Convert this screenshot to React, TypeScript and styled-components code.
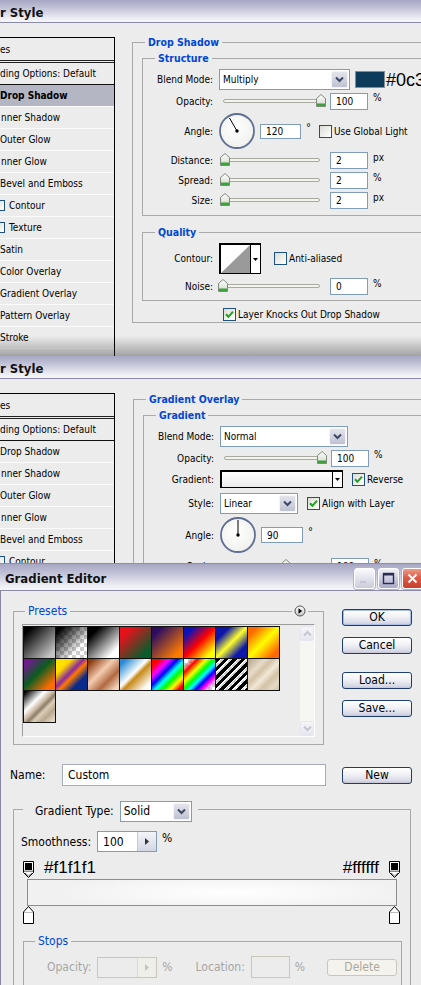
import React from 'react';
import styled, { createGlobalStyle, css } from 'styled-components';

// === TOKENS ===

const UI = `"DejaVu Sans Condensed", "Liberation Sans", Arial, sans-serif`;
const ARIAL = `"Liberation Sans", Arial, sans-serif`;
const BG = '#ececec';
const BLUE = '#0046d5';
const FIELD_BORDER = '#7f9db9';
const GROUP_LINE = '#a9a9a9';
const CHECKER = 'conic-gradient(#cdcdcd 25%, #ffffff 0 50%, #cdcdcd 0 75%, #ffffff 0) 0 0 / 8px 8px';

const GlobalStyle = createGlobalStyle`
  * { box-sizing: border-box; }
  html, body { margin: 0; padding: 0; background: ${BG}; }
  body { font-family: ${UI}; font-size: 10px; color: #000; }
`;

// === WINDOW CHROME ===

const Page = styled.main`
  width: 421px;
  height: 985px;
  overflow: hidden;
  display: flex;
  flex-direction: column;
`;

const Window = styled.section<{ $height: number; $shade?: boolean }>`
  position: relative;
  flex: none;
  height: ${({ $height }) => $height}px;
  overflow: hidden;
  background: ${BG};
  display: flex;
  flex-direction: column;

  ${({ $shade }) => $shade && css`
    &::after {
      content: '';
      position: absolute;
      left: 0;
      right: 0;
      bottom: 0;
      height: 20px;
      pointer-events: none;
      background: linear-gradient(to bottom, rgba(40, 40, 40, 0), rgba(40, 40, 40, 0.38));
    }
  `}
`;

const TitleBar = styled.header<{ $height: number; $padTop?: number; $topLine?: boolean }>`
  flex: none;
  height: ${({ $height }) => $height}px;
  padding-top: ${({ $padTop }) => $padTop ?? 0}px;
  display: flex;
  align-items: center;
  background: linear-gradient(to bottom, #a7a7c4 0%, #b9b9d1 25%, #d4d4e3 55%, #ececf3 82%, #f7f7fa 100%);
  border-bottom: 1px solid #8a8aa6;
  ${({ $topLine }) => $topLine && css`border-top: 1px solid #8e8ea8;`}
`;

const TitleText = styled.h1<{ $indent: number }>`
  flex: 1;
  margin: 0 0 0 ${({ $indent }) => $indent}px;
  font: bold 13px ${UI};
  color: #111;
  white-space: nowrap;
`;

const CaptionButtons = styled.div`
  flex: none;
  display: flex;
  gap: 3px;
  margin-right: -2px;
`;

const CaptionButton = styled.span<{ $kind: 'min' | 'max' | 'close' }>`
  width: 21px;
  height: 21px;
  border: 1px solid #fff;
  border-radius: 3px;
  display: flex;
  align-items: center;
  justify-content: center;
  box-shadow: 0 0 0 1px #b2b2c8;
  background: ${({ $kind }) =>
    $kind === 'close'
      ? 'linear-gradient(to bottom, #ee9a88 0%, #dc5c48 45%, #c8402c 100%)'
      : $kind === 'max'
        ? 'linear-gradient(to bottom, #f2f2f8 0%, #c8c9de 55%, #a9abc8 100%)'
        : 'linear-gradient(to bottom, #fafafd 0%, #dedeea 60%, #cacad9 100%)'};
`;

// === LAYER STYLE: STYLES LIST ===

const DialogBody = styled.div`
  flex: 1;
  min-height: 0;
  display: flex;
  align-items: flex-start;
`;

const StyleList = styled.ul`
  flex: none;
  align-self: stretch;
  width: 115px;
  margin: 14px 0 0 0;
  padding: 0;
  list-style: none;
  border-right: 1px solid #000;
`;

const ListHeader = styled.li`
  height: 26px;
  display: flex;
  align-items: center;
  border-top: 1px solid #000;
  border-bottom: 3px double #222;
  white-space: nowrap;
`;

const ListItem = styled.li<{ $indent: number; $selected?: boolean; $dark?: boolean }>`
  height: 22px;
  padding-left: ${({ $indent }) => $indent}px;
  display: flex;
  align-items: center;
  gap: 4px;
  white-space: nowrap;
  background: ${({ $selected }) => ($selected ? '#b5b6c3' : BG)};
  font-weight: ${({ $selected }) => ($selected ? 'bold' : 'normal')};
  border-bottom: 1px solid ${({ $dark }) => ($dark ? '#111' : '#fbfbfb')};
`;

const ListCheck = styled.span`
  flex: none;
  width: 11px;
  height: 11px;
  margin-left: -6px;
  border: 1px solid #1c5180;
  background: linear-gradient(135deg, #dcdcd6 0%, #f3f3f0 65%, #fff 100%);
`;

// === GROUP BOXES AND FORM ROWS ===

const Content = styled.div<{ $top: number; $left: number }>`
  flex: none;
  width: 330px;
  margin: ${({ $top }) => $top}px 0 0 ${({ $left }) => $left}px;
`;

const Group = styled.fieldset<{ $mt?: number; $ml?: number; $width?: number; $height?: number }>`
  position: relative;
  min-width: 0;
  margin: ${({ $mt }) => $mt ?? 0}px 0 0 ${({ $ml }) => $ml ?? 0}px;
  padding: 0;
  border: 1px solid ${GROUP_LINE};
  ${({ $width }) => $width && css`width: ${$width}px;`}
  ${({ $height }) => $height && css`height: ${$height}px;`}
`;

const Legend = styled.legend<{ $size?: number; $regular?: boolean; $ml?: number }>`
  margin-left: ${({ $ml }) => $ml ?? 12}px;
  padding: 0 3px;
  color: ${BLUE};
  font-family: ${UI};
  font-weight: ${({ $regular }) => ($regular ? 'normal' : 'bold')};
  font-size: ${({ $size }) => $size ?? 10.5}px;
  line-height: ${({ $size }) => ($size ? $size + 1 : 12)}px;
  white-space: nowrap;
`;

const GroupInner = styled.div<{ $pad: string }>`
  padding: ${({ $pad }) => $pad};
`;

const FieldRow = styled.div<{ $h: number; $mt?: number; $pl?: number }>`
  display: flex;
  align-items: center;
  height: ${({ $h }) => $h}px;
  margin-top: ${({ $mt }) => $mt ?? 0}px;
  padding-left: ${({ $pl }) => $pl ?? 0}px;
  white-space: nowrap;
`;

const FieldLabel = styled.label`
  flex: none;
  width: 70px;
  margin-right: 6px;
  text-align: right;
  white-space: nowrap;
`;

const Unit = styled.span<{ $ml?: number; $up?: number }>`
  flex: none;
  align-self: flex-start;
  margin-left: ${({ $ml }) => $ml ?? 5}px;
  margin-top: ${({ $up }) => $up ?? 0}px;
  line-height: 12px;
`;

const NumField = styled.div<{ $w: number; $h: number; $disabled?: boolean; $ml?: number }>`
  flex: none;
  display: flex;
  align-items: center;
  width: ${({ $w }) => $w}px;
  height: ${({ $h }) => $h}px;
  margin-left: ${({ $ml }) => $ml ?? 0}px;
  padding-left: 5px;
  background: ${({ $disabled }) => ($disabled ? BG : '#fff')};
  border: 1px solid ${({ $disabled }) => ($disabled ? '#c9c7ba' : FIELD_BORDER)};
`;

const SelectBox = styled.div<{ $w: number; $h: number }>`
  flex: none;
  display: flex;
  width: ${({ $w }) => $w}px;
  height: ${({ $h }) => $h}px;
  background: #fff;
  border: 1px solid ${FIELD_BORDER};
`;

const SelectValue = styled.span`
  flex: 1;
  display: flex;
  align-items: center;
  padding-left: 3px;
  overflow: hidden;
`;

const DropButton = styled.span`
  flex: none;
  width: 17px;
  margin: 1px;
  display: flex;
  align-items: center;
  justify-content: center;
  border: 1px solid #f4f4f8;
  border-radius: 2px;
  background: linear-gradient(to bottom, #e4e4ec 0%, #cfd0dd 60%, #bfc0d1 100%);
`;

const CheckBox = styled.span<{ $size: number }>`
  flex: none;
  display: inline-flex;
  align-items: center;
  justify-content: center;
  width: ${({ $size }) => $size}px;
  height: ${({ $size }) => $size}px;
  border: 1px solid #1c5180;
  background: linear-gradient(135deg, #dcdcd6 0%, #f3f3f0 65%, #fff 100%);
`;

const CheckRow = styled.span<{ $ml?: number }>`
  flex: none;
  display: inline-flex;
  align-items: center;
  gap: 2px;
  margin-left: ${({ $ml }) => $ml ?? 0}px;
`;

const SliderBox = styled.div`
  position: relative;
  flex: none;
  width: 111px;
  height: 16px;
`;

const SliderTrack = styled.div`
  position: absolute;
  left: 4px;
  right: 10px;
  top: 6px;
  height: 4px;
  border: 1px solid #aaa9a0;
  border-radius: 2px;
  background: #f4f4ef;
`;

const SliderThumb = styled.svg`
  position: absolute;
  top: 1px;
`;

const DialSvg = styled.svg`
  flex: none;
`;

const Swatch = styled.span<{ $color: string }>`
  flex: none;
  width: 30px;
  height: 17px;
  margin-left: 5px;
  background: ${({ $color }) => $color};
  border: 1px solid #8c8c8c;
`;

const BigHex = styled.span`
  flex: none;
  margin-left: 1px;
  font: 18px/18px ${ARIAL};
  color: #000;
`;

const ContourPicker = styled.div`
  flex: none;
  display: flex;
  width: 42px;
  height: 31px;
  border: 1px solid #000;
  border-width: 2px 1px 1px 2px;
  background: #fff;
`;

const PickerArrow = styled.span`
  flex: none;
  width: 10px;
  display: flex;
  align-items: center;
  justify-content: center;
  border-left: 1px solid #000;
  background: #fff;
`;

const GradientPicker = styled.div`
  flex: none;
  display: flex;
  width: 123px;
  height: 18px;
  border: 1px solid #000;
  border-width: 2px 1px 1px 2px;
  background: linear-gradient(to bottom, #ffffff 0%, #f4f4f4 60%, #ebebeb 100%);
`;

const PickerFill = styled.span`
  flex: 1;
`;

const Degree = styled.span`
  flex: none;
  align-self: flex-start;
  margin: 10px 0 0 5px;
  font-size: 11px;
  line-height: 12px;
`;

// === GRADIENT EDITOR ===

const EditorBody = styled.div`
  flex: 1;
  min-height: 0;
  display: flex;
  flex-direction: column;
  padding: 14px 0 0 9px;
  border-left: 1px solid #8686a2;
  font-size: 12px;
`;

const TopArea = styled.div`
  display: flex;
  align-items: flex-start;
`;

const MenuButton = styled.span`
  position: absolute;
  right: 15px;
  top: -13px;
  padding: 0 2px;
  background: ${BG};
  display: flex;
`;

const SwatchWell = styled.div`
  display: flex;
  width: 293px;
  height: 113px;
  margin: 6px 0 7px 8px;
  padding: 1px 0 0 0;
  border: 1px solid;
  border-color: #9c9c9c #ffffff #ffffff #9c9c9c;
`;

const SwatchGrid = styled.div`
  flex: none;
  width: 257px;
  display: flex;
  flex-wrap: wrap;
  align-content: flex-start;
`;

const PresetSwatch = styled.span<{ $bg: string }>`
  flex: none;
  width: 33px;
  height: 33px;
  margin: 0 -1px -1px 0;
  border: 1px solid #101010;
  background: ${({ $bg }) => $bg};
`;

const ScrollBar = styled.div`
  flex: none;
  width: 14px;
  margin-left: auto;
  display: flex;
  flex-direction: column;
  justify-content: space-between;
  background: #f6f6f2;
`;

const ScrollArrow = styled.span`
  height: 15px;
  display: flex;
  align-items: center;
  justify-content: center;
  border: 1px solid #e6e6ee;
  border-radius: 2px;
  background: linear-gradient(to bottom, #f6f6f9 0%, #e6e6ee 100%);
`;

const ButtonColumn = styled.div`
  flex: none;
  display: flex;
  flex-direction: column;
  margin: 4px 0 0 18px;
`;

const PushButton = styled.button<{ $default?: boolean; $disabled?: boolean; $mt?: number; $ml?: number }>`
  flex: none;
  width: 70px;
  height: 17px;
  margin: ${({ $mt }) => $mt ?? 0}px 0 0 ${({ $ml }) => $ml ?? 0}px;
  padding: 0;
  font: 12px/15px ${UI};
  color: ${({ $disabled }) => ($disabled ? '#aca899' : '#000')};
  border: 1px solid ${({ $disabled }) => ($disabled ? '#c9c7ba' : '#1f3c6e')};
  border-radius: 3px;
  background: ${({ $disabled }) =>
    $disabled
      ? '#f4f3ee'
      : 'linear-gradient(to bottom, #ffffff 0%, #f3f3f7 40%, #d9dae6 85%, #c3c4d4 100%)'};
  ${({ $default }) => $default && css`box-shadow: inset 0 0 0 1px #a9bde6;`}
`;

const EditorRow = styled.div<{ $h: number; $mt?: number; $pl?: number }>`
  display: flex;
  align-items: center;
  height: ${({ $h }) => $h}px;
  margin-top: ${({ $mt }) => $mt ?? 0}px;
  padding-left: ${({ $pl }) => $pl ?? 0}px;
  white-space: nowrap;
`;

const EditorLabel = styled.span<{ $w?: number; $muted?: boolean; $ml?: number }>`
  flex: none;
  ${({ $w }) => $w && css`width: ${$w}px;`}
  margin-left: ${({ $ml }) => $ml ?? 0}px;
  margin-right: 6px;
  color: ${({ $muted }) => ($muted ? '#a6a6a6' : '#000')};
`;

const TextField = styled.div<{ $w: number; $h: number }>`
  flex: none;
  display: flex;
  align-items: center;
  width: ${({ $w }) => $w}px;
  height: ${({ $h }) => $h}px;
  padding-left: 5px;
  background: #fff;
  border: 1px solid #a5acb5;
`;

const SpinField = styled.div<{ $disabled?: boolean }>`
  flex: none;
  display: flex;
  width: 60px;
  height: 21px;
  background: ${({ $disabled }) => ($disabled ? BG : '#fff')};
  border: 1px solid ${({ $disabled }) => ($disabled ? '#c9c7ba' : FIELD_BORDER)};
`;

const SpinValue = styled.span`
  flex: 1;
  display: flex;
  align-items: center;
  padding-left: 5px;
`;

const SpinArrow = styled.span<{ $disabled?: boolean }>`
  flex: none;
  width: 19px;
  display: flex;
  align-items: center;
  justify-content: center;
  border-left: 1px solid ${({ $disabled }) => ($disabled ? '#dcdad0' : '#c4c8d8')};
  background: ${({ $disabled }) =>
    $disabled ? '#efefea' : 'linear-gradient(to bottom, #f4f4f8 0%, #d4d6e4 100%)'};
`;

const TypeLegend = styled.legend`
  display: flex;
  align-items: flex-start;
  height: 17px;
  margin-left: 9px;
  padding: 0 6px 0 12px;
  font-size: 12px;
  line-height: 21px;
  white-space: nowrap;
`;

const StopRow = styled.div<{ $h: number; $mt?: number }>`
  display: flex;
  align-items: flex-start;
  justify-content: space-between;
  width: 377px;
  height: ${({ $h }) => $h}px;
  margin: ${({ $mt }) => $mt ?? 0}px 0 0 9px;
`;

const StopSide = styled.span`
  display: flex;
  align-items: flex-start;
  gap: 10px;
`;

const StopHex = styled.span`
  margin-top: -2px;
  font: 17px/18px ${ARIAL};
  color: #000;
`;

const GradientBar = styled.div`
  width: 370px;
  height: 27px;
  margin: 2px 0 0 13px;
  border: 1px solid #8e8e8e;
  background: radial-gradient(ellipse 60% 90% at 55% 50%, #ffffff 0%, #f8f8f8 40%, #f1f1f1 80%);
`;

// === SMALL DRAWINGS ===

function Chevron({ color = '#3c4866' }: { color?: string }) {
  return (
    <svg width="9" height="7" viewBox="0 0 9 7">
      <path d="M1 1.5 L4.5 5 L8 1.5" fill="none" stroke={color} strokeWidth="2" />
    </svg>
  );
}

function ChevronUp({ color }: { color: string }) {
  return (
    <svg width="9" height="7" viewBox="0 0 9 7">
      <path d="M1 5.5 L4.5 2 L8 5.5" fill="none" stroke={color} strokeWidth="2" />
    </svg>
  );
}

function DownTriangle() {
  return (
    <svg width="5" height="3" viewBox="0 0 5 3">
      <path d="M0 0 H5 L2.5 3 Z" fill="#000" />
    </svg>
  );
}

function Check({ checked, size = 13 }: { checked?: boolean; size?: number }) {
  return (
    <CheckBox $size={size}>
      {checked && (
        <svg width="9" height="9" viewBox="0 0 9 9">
          <path d="M1 4.2 L3.4 6.8 L8 1.6" fill="none" stroke="#21a121" strokeWidth="2" />
        </svg>
      )}
    </CheckBox>
  );
}

function Select({ value, width, height = 21 }: { value: string; width: number; height?: number }) {
  return (
    <SelectBox $w={width} $h={height}>
      <SelectValue>{value}</SelectValue>
      <DropButton>
        <Chevron />
      </DropButton>
    </SelectBox>
  );
}

function Slider({ value }: { value: number }) {
  return (
    <SliderBox>
      <SliderTrack />
      <SliderThumb width="10" height="13" viewBox="0 0 10 13" style={{ left: 1 + value * 0.96 }}>
        <defs>
          <linearGradient id="thumbFill" x1="0" y1="0" x2="0" y2="1">
            <stop offset="0" stopColor="#ffffff" />
            <stop offset="1" stopColor="#d4d6cc" />
          </linearGradient>
        </defs>
        <path d="M0.5 4.5 L5 0.5 L9.5 4.5 V12.5 H0.5 Z" fill="url(#thumbFill)" stroke="#7d8a7c" />
        <rect x="1" y="9.5" width="8" height="2.5" fill="#3ca23c" />
      </SliderThumb>
    </SliderBox>
  );
}

function Dial({ angle, id }: { angle: number; id: string }) {
  const rad = (angle * Math.PI) / 180;
  const x2 = 18 + Math.cos(rad) * 15;
  const y2 = 18 - Math.sin(rad) * 15;
  return (
    <DialSvg width="37" height="37" viewBox="0 0 37 37">
      <defs>
        <radialGradient id={id} cx="0.45" cy="0.4" r="0.7">
          <stop offset="0" stopColor="#ffffff" />
          <stop offset="0.75" stopColor="#f2f2f0" />
          <stop offset="1" stopColor="#d8d8d8" />
        </radialGradient>
      </defs>
      <circle cx="18" cy="18" r="17" fill={`url(#${id})`} stroke="#5f6f94" strokeWidth="1.8" />
      <line x1="18" y1="18" x2={x2} y2={y2} stroke="#000" strokeWidth="1" />
      <circle cx="18" cy="18" r="1.7" fill="#000" />
    </DialSvg>
  );
}

function NumberInput({ value }: { value: string }) {
  return <NumField $w={38} $h={17}>{value}</NumField>;
}

function SliderRow({ label, value, pos, unit, mt = 0 }: { label: string; value: string; pos: number; unit: string; mt?: number }) {
  return (
    <FieldRow $h={20} $mt={mt}>
      <FieldLabel>{label}</FieldLabel>
      <Slider value={pos} />
      <NumberInput value={value} />
      <Unit $up={2}>{unit}</Unit>
    </FieldRow>
  );
}

function OpacityStop() {
  return (
    <svg width="11" height="17" viewBox="0 0 11 17">
      <path d="M0.5 0.5 H10.5 V11.5 L5.5 16.5 L0.5 11.5 Z" fill="#fff" stroke="#000" />
      <rect x="2" y="2" width="7" height="7" fill="#000" />
      <rect x="1" y="9.5" width="9" height="1.5" fill="#8a8a8a" />
      <path d="M2 12 L5.5 15 L9 12" fill="none" stroke="#666" />
    </svg>
  );
}

function ColorStop() {
  return (
    <svg width="11" height="18" viewBox="0 0 11 18">
      <path d="M5.5 0.5 L10.5 6 V17.5 H0.5 V6 Z" fill="#fff" stroke="#000" />
      <path d="M1 6.5 H10" stroke="#bdbdbd" />
    </svg>
  );
}

// === DATA ===

// the dialogs are cropped at the left edge, so only the visible part of each entry is listed
const EFFECTS: { name: string; sub?: boolean; indent?: number }[] = [
  { name: 'Drop Shadow' },
  { name: 'nner Shadow', indent: 1 },
  { name: 'Outer Glow' },
  { name: 'nner Glow', indent: 1 },
  { name: 'Bevel and Emboss' },
  { name: 'Contour', sub: true },
  { name: 'Texture', sub: true },
  { name: 'Satin' },
  { name: 'Color Overlay' },
  { name: 'Gradient Overlay' },
  { name: 'Pattern Overlay' },
  { name: 'Stroke' },
];

const PRESETS: string[] = [
  'linear-gradient(135deg, #000 12%, #c4c4c4 88%)',
  `linear-gradient(135deg, #000 10%, rgba(0,0,0,0) 72%), ${CHECKER}`,
  'linear-gradient(135deg, #000 18%, #fff 82%)',
  'linear-gradient(135deg, #e8101a 18%, #0b5b2c 82%)',
  'linear-gradient(135deg, #2b0c60 15%, #ff7b00 85%)',
  'linear-gradient(135deg, #0a12b8 15%, #ff0000 50%, #ffff00 85%)',
  'linear-gradient(135deg, #0c16a8 22%, #ffff2a 50%, #0c16a8 78%)',
  'linear-gradient(135deg, #ff6a00 15%, #ffff00 50%, #ff6a00 85%)',
  'linear-gradient(135deg, #701a8e 10%, #0a5c20 45%, #ff6c00 85%)',
  'linear-gradient(135deg, #ffe200 15%, #ffd800 25%, #8c2a9e 45%, #ff7a00 55%, #0a2a8c 75%)',
  'linear-gradient(135deg, #8a3a10 8%, #f4ccb0 42%, #b06a42 68%, #f2d4b8 92%)',
  'linear-gradient(135deg, #2a8ad4 10%, #ffffff 45%, #c88a18 55%, #ffffff 88%)',
  'linear-gradient(135deg, #ff0000 12%, #ff00ff 28%, #0000ff 42%, #00ffff 54%, #00ff00 66%, #ffff00 79%, #ff0000 92%)',
  `linear-gradient(135deg, rgba(255,0,0,0) 10%, #ff0000 22%, #ffff00 36%, #00ff00 48%, #00ffff 58%, #0000ff 68%, #ff00ff 78%, rgba(255,0,255,0) 90%), ${CHECKER}`,
  `repeating-linear-gradient(135deg, #000 0 3px, #fff 3px 4px, rgba(255,255,255,0) 4px 6px), ${CHECKER}`,
  'linear-gradient(135deg, #b2a28a 0%, #e8dcc8 28%, #d2c2a6 40%, #f2e8d6 55%, #d2c2a6 70%, #e6dac4 86%, #cdbda2 100%)',
  'linear-gradient(135deg, #000 4%, #ffffff 34%, #c9b9a1 48%, #8c7c6a 56%, #dccdb6 64%, #b8a890 78%, #e2d6c2 94%)',
];

// === PIECES ===

function StylesPanel({ selected }: { selected: string }) {
  return (
    <StyleList>
      <ListHeader>es</ListHeader>
      <ListItem $indent={0} $dark>ding Options: Default</ListItem>
      {EFFECTS.map(({ name, sub, indent }) => (
        <ListItem key={name} $indent={indent ?? 0} $selected={name === selected}>
          {sub && <ListCheck />}
          {name}
        </ListItem>
      ))}
    </StyleList>
  );
}

function DropShadowPanel() {
  return (
    <Content $top={13} $left={17}>
      <Group>
        <Legend>Drop Shadow</Legend>
        <GroupInner $pad="4px 0 0 9px">
          <Group>
            <Legend>Structure</Legend>
            <GroupInner $pad="5px 0 5px 0">
              <FieldRow $h={21}>
                <FieldLabel>Blend Mode:</FieldLabel>
                <Select value="Multiply" width={131} />
                <Swatch $color="#0d3b5c" />
                <BigHex>#0c3</BigHex>
              </FieldRow>
              <FieldRow $h={18} $mt={2}>
                <FieldLabel>Opacity:</FieldLabel>
                <Slider value={100} />
                <NumberInput value="100" />
                <Unit>%</Unit>
              </FieldRow>
              <FieldRow $h={38} $mt={2}>
                <FieldLabel>Angle:</FieldLabel>
                <Dial angle={120} id="dialA" />
                <NumField $w={41} $h={15} $ml={4}>120</NumField>
                <Degree>°</Degree>
                <CheckRow $ml={8}>
                  <Check />
                  Use Global Light
                </CheckRow>
              </FieldRow>
              <SliderRow label="Distance:" value="2" pos={0} unit="px" />
              <SliderRow label="Spread:" value="2" pos={0} unit="%" />
              <SliderRow label="Size:" value="2" pos={0} unit="px" />
            </GroupInner>
          </Group>
          <Group $mt={10}>
            <Legend>Quality</Legend>
            <GroupInner $pad="5px 0 4px 0">
              <FieldRow $h={31}>
                <FieldLabel>Contour:</FieldLabel>
                <ContourPicker>
                  <PickerFill>
                    <svg width="29" height="28" viewBox="0 0 29 28">
                      <path d="M0 28 L29 0 V28 Z" fill="#9a9a9a" />
                    </svg>
                  </PickerFill>
                  <PickerArrow>
                    <DownTriangle />
                  </PickerArrow>
                </ContourPicker>
                <CheckRow $ml={13}>
                  <Check />
                  Anti-aliased
                </CheckRow>
              </FieldRow>
              <SliderRow label="Noise:" value="0" pos={-2} unit="%" mt={2} />
            </GroupInner>
          </Group>
          <FieldRow $h={15} $mt={6} $pl={81}>
            <CheckRow>
              <Check checked />
              Layer Knocks Out Drop Shadow
            </CheckRow>
          </FieldRow>
        </GroupInner>
      </Group>
    </Content>
  );
}

function GradientOverlayPanel() {
  return (
    <Content $top={14} $left={18}>
      <Group>
        <Legend>Gradient Overlay</Legend>
        <GroupInner $pad="4px 0 0 9px">
          <Group>
            <Legend>Gradient</Legend>
            <GroupInner $pad="5px 0 5px 0">
              <FieldRow $h={21}>
                <FieldLabel>Blend Mode:</FieldLabel>
                <Select value="Normal" width={128} />
              </FieldRow>
              <FieldRow $h={18} $mt={2}>
                <FieldLabel>Opacity:</FieldLabel>
                <Slider value={100} />
                <NumberInput value="100" />
                <Unit>%</Unit>
              </FieldRow>
              <FieldRow $h={20} $mt={2}>
                <FieldLabel>Gradient:</FieldLabel>
                <GradientPicker>
                  <PickerFill />
                  <PickerArrow>
                    <DownTriangle />
                  </PickerArrow>
                </GradientPicker>
                <CheckRow $ml={9}>
                  <Check checked />
                  Reverse
                </CheckRow>
              </FieldRow>
              <FieldRow $h={21} $mt={4}>
                <FieldLabel>Style:</FieldLabel>
                <Select value="Linear" width={78} />
                <CheckRow $ml={9}>
                  <Check checked />
                  Align with Layer
                </CheckRow>
              </FieldRow>
              <FieldRow $h={38} $mt={2}>
                <FieldLabel>Angle:</FieldLabel>
                <Dial angle={90} id="dialB" />
                <NumField $w={42} $h={16} $ml={4}>90</NumField>
                <Degree>°</Degree>
              </FieldRow>
              <SliderRow label="Scale:" value="100" pos={62} unit="%" mt={2} />
            </GroupInner>
          </Group>
        </GroupInner>
      </Group>
    </Content>
  );
}

function GradientEditor() {
  return (
    <Window $height={422}>
      <TitleBar $height={28} $padTop={3} $topLine>
        <TitleText $indent={5}>Gradient Editor</TitleText>
        <CaptionButtons>
          <CaptionButton $kind="min">
            <svg width="13" height="13" viewBox="0 0 13 13">
              <rect x="2" y="9" width="6" height="2" fill="#c4c4d2" />
            </svg>
          </CaptionButton>
          <CaptionButton $kind="max">
            <svg width="13" height="13" viewBox="0 0 13 13">
              <rect x="1.5" y="1.5" width="10" height="10" fill="none" stroke="#2a2c52" strokeWidth="1.4" />
              <rect x="1.5" y="1.5" width="10" height="2" fill="#2a2c52" />
            </svg>
          </CaptionButton>
          <CaptionButton $kind="close">
            <svg width="13" height="13" viewBox="0 0 13 13">
              <path d="M2.5 2.5 L10.5 10.5 M10.5 2.5 L2.5 10.5" stroke="#fff" strokeWidth="2" />
            </svg>
          </CaptionButton>
        </CaptionButtons>
      </TitleBar>

      <EditorBody>
        <TopArea>
          <Group $ml={3} $width={311}>
            <Legend $regular $size={12} $ml={11}>Presets</Legend>
            <MenuButton>
              <svg width="12" height="12" viewBox="0 0 12 12">
                <defs>
                  <linearGradient id="menuFill" x1="0" y1="0" x2="0" y2="1">
                    <stop offset="0" stopColor="#ffffff" />
                    <stop offset="1" stopColor="#c8c8c8" />
                  </linearGradient>
                </defs>
                <circle cx="6" cy="6" r="5" fill="url(#menuFill)" stroke="#555" />
                <path d="M4.5 3.2 L8.2 6 L4.5 8.8 Z" fill="#000" />
              </svg>
            </MenuButton>
            <SwatchWell>
              <SwatchGrid>
                {PRESETS.map((bg, i) => (
                  <PresetSwatch key={i} $bg={bg} />
                ))}
              </SwatchGrid>
              <ScrollBar>
                <ScrollArrow>
                  <ChevronUp color="#c6c6d0" />
                </ScrollArrow>
                <ScrollArrow>
                  <Chevron color="#c6c6d0" />
                </ScrollArrow>
              </ScrollBar>
            </SwatchWell>
          </Group>
          <ButtonColumn>
            <PushButton $default>OK</PushButton>
            <PushButton $mt={11}>Cancel</PushButton>
            <PushButton $mt={18}>Load...</PushButton>
            <PushButton $mt={11}>Save...</PushButton>
          </ButtonColumn>
        </TopArea>

        <EditorRow $h={22} $mt={19}>
          <EditorLabel $w={46}>Name:</EditorLabel>
          <TextField $w={264} $h={22}>Custom</TextField>
          <PushButton $ml={16}>New</PushButton>
        </EditorRow>

        <Group $mt={15} $ml={3} $width={398} $height={200}>
          <TypeLegend>
            <EditorLabel>Gradient Type:</EditorLabel>
            <Select value="Solid" width={72} />
          </TypeLegend>
          <EditorRow $h={21} $mt={13} $pl={7}>
            <EditorLabel>Smoothness:</EditorLabel>
            <SpinField>
              <SpinValue>100</SpinValue>
              <SpinArrow>
                <svg width="4" height="7" viewBox="0 0 4 7">
                  <path d="M0 0 L4 3.5 L0 7 Z" fill="#333" />
                </svg>
              </SpinArrow>
            </SpinField>
            <Unit $ml={5} $up={1}>%</Unit>
          </EditorRow>

          <StopRow $h={16} $mt={9}>
            <StopSide>
              <OpacityStop />
              <StopHex>#f1f1f1</StopHex>
            </StopSide>
            <StopSide>
              <StopHex>#ffffff</StopHex>
              <OpacityStop />
            </StopSide>
          </StopRow>
          <GradientBar />
          <StopRow $h={18}>
            <ColorStop />
            <ColorStop />
          </StopRow>

          <Group $mt={11} $ml={9} $width={379} $height={80}>
            <Legend $regular $size={12} $ml={11}>Stops</Legend>
            <EditorRow $h={22} $mt={8} $pl={23}>
              <EditorLabel $muted>Opacity:</EditorLabel>
              <SpinField $disabled>
                <SpinValue />
                <SpinArrow $disabled>
                  <svg width="4" height="7" viewBox="0 0 4 7">
                    <path d="M0 0 L4 3.5 L0 7 Z" fill="#c4c4c4" />
                  </svg>
                </SpinArrow>
              </SpinField>
              <EditorLabel $muted $ml={5}>%</EditorLabel>
              <EditorLabel $muted $ml={17}>Location:</EditorLabel>
              <NumField $w={39} $h={22} $disabled />
              <EditorLabel $muted $ml={5}>%</EditorLabel>
              <PushButton $disabled $ml={16}>Delete</PushButton>
            </EditorRow>
          </Group>
        </Group>
      </EditorBody>
    </Window>
  );
}

// === APP ===

export default function App() {
  return (
    <>
      <GlobalStyle />
      <Page>
        <Window $height={356} $shade>
          <TitleBar $height={23} $padTop={3}>
            <TitleText $indent={0}>r Style</TitleText>
          </TitleBar>
          <DialogBody>
            <StylesPanel selected="Drop Shadow" />
            <DropShadowPanel />
          </DialogBody>
        </Window>

        <Window $height={207}>
          <TitleBar $height={23} $padTop={3}>
            <TitleText $indent={0}>r Style</TitleText>
          </TitleBar>
          <DialogBody>
            <StylesPanel selected="" />
            <GradientOverlayPanel />
          </DialogBody>
        </Window>

        <GradientEditor />
      </Page>
    </>
  );
}
